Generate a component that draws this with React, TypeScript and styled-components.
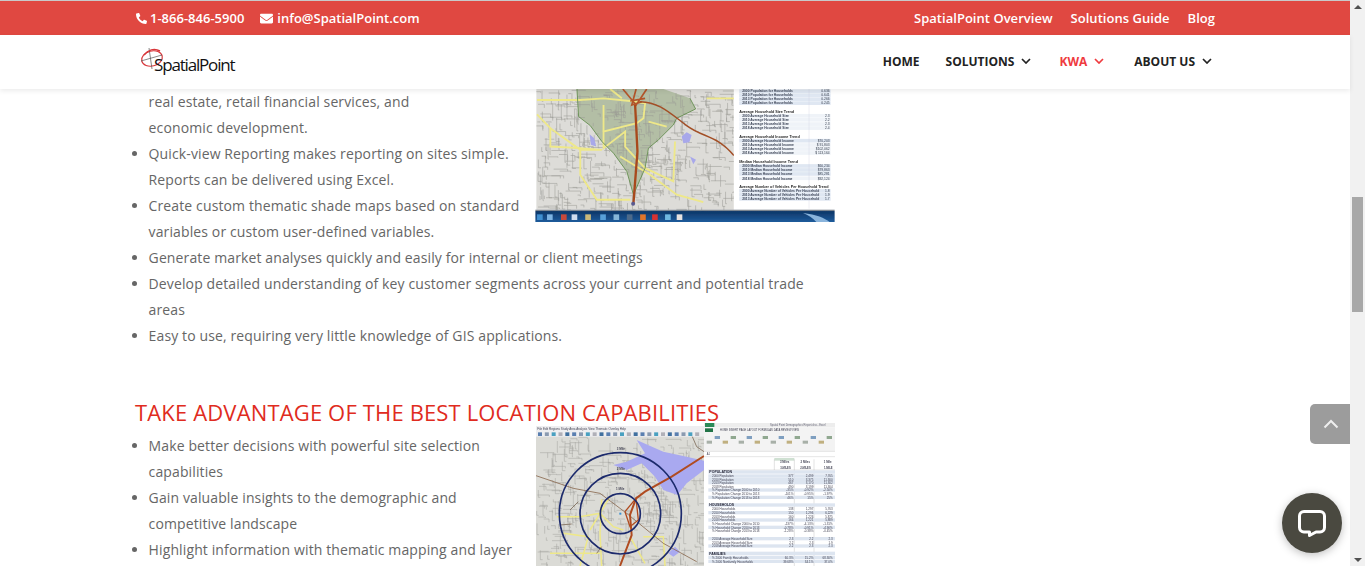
import React from "react";
import styled, { createGlobalStyle } from "styled-components";
import { FaPhone, FaEnvelope } from "react-icons/fa";

const Global = createGlobalStyle`
  html, body { margin: 0; padding: 0; height: 566px; overflow: hidden; background: #fff; }
  * { box-sizing: border-box; }
  body { font-family: "Open Sans", "DejaVu Sans", sans-serif; }
`;

const Shell = styled.div`
  display: flex;
  width: 1365px;
  height: 566px;
  position: relative;
  overflow: hidden;
`;
const Main = styled.div`
  flex: 1;
  min-width: 0;
  display: flex;
  flex-direction: column;
`;
const TopBar = styled.div`
  height: 35px;
  flex: none;
  background: #e04841;
  border-top: 1px solid #c9c9c9;
  padding: 0 135px 0 136px;
  display: flex;
  align-items: center;
  justify-content: space-between;
  color: #fff;
  font-size: 13px;
  font-weight: 600;
  letter-spacing: 0.03px;
`;
const TopGroup = styled.div<{ $gap: number }>`
  display: flex;
  align-items: center;
  gap: ${(p) => p.$gap}px;
`;
const Contact = styled.span`
  display: inline-flex;
  align-items: center;
  gap: 3px;
  white-space: nowrap;
  letter-spacing: 0;
`;
const MailIcon = styled(FaEnvelope)`
  margin-right: 1px;
`;
const PhoneIcon = styled(FaPhone)`
  transform: scaleX(-1);
`;
const NavBar = styled.div`
  height: 54px;
  flex: none;
  background: #fff;
  padding: 0 138px 2px 140px;
  display: flex;
  align-items: center;
  justify-content: space-between;
  box-shadow: 0 2px 5px rgba(0, 0, 0, 0.08);
  position: relative;
  z-index: 2;
`;
const Logo = styled.div`
  position: relative;
  width: 96px;
  height: 29px;
  display: flex;
  align-items: flex-end;
`;
const LogoMark = styled.svg`
  position: absolute;
  left: 0;
  top: 0;
`;
const LogoText = styled.span`
  position: relative;
  margin-left: 14px;
  font-family: "Open Sans", sans-serif;
  font-size: 17px;
  line-height: 22px;
  letter-spacing: -1.17px;
  color: #111;
`;
const Menu = styled.nav`
  display: flex;
  align-items: center;
  gap: 26px;
`;
const MenuItem = styled.span<{ $active?: boolean; $pad?: number }>`
  display: inline-flex;
  align-items: center;
  gap: 7px;
  padding-right: ${(p) => p.$pad ?? 0}px;
  font-size: 12px;
  font-weight: 700;
  color: ${(p) => (p.$active ? "#ef3b3f" : "#222")};
`;
const Content = styled.main`
  flex: 1;
  min-height: 0;
  overflow: hidden;
  padding-left: 135px;
  color: #666;
  font-size: 14px;
  line-height: 26px;
  letter-spacing: 0.12px;
`;
const Section = styled.section`
  width: 700px;
  display: flow-root;
`;
const Figure = styled.svg`
  float: right;
  display: block;
  margin-left: 15px;
`;
const List = styled.ul<{ $top?: number }>`
  margin: 0;
  padding: ${(p) => p.$top ?? 0}px 0 0 13.6px;
  list-style: disc;
`;
const Item = styled.li<{ $plain?: boolean }>`
  list-style: ${(p) => (p.$plain ? "none" : "disc")};
`;
const Heading = styled.h2`
  margin: 53px 0 0;
  font-size: 22px;
  line-height: 21px;
  font-weight: 400;
  letter-spacing: 0.15px;
  color: #e02b20;
  white-space: nowrap;
`;
const Track = styled.div`
  width: 15px;
  flex: none;
  background: #f1f1f1;
  display: flex;
  flex-direction: column;
  align-items: center;
  justify-content: space-between;
  padding-top: 5px;
  padding-bottom: 4px;
  position: relative;
`;
const Arrow = styled.i<{ $down?: boolean }>`
  display: block;
  width: 0;
  height: 0;
  border-left: 4px solid transparent;
  border-right: 4px solid transparent;
  ${(p) => (p.$down ? "border-top: 4px solid #505050;" : "border-bottom: 4px solid #505050;")}
`;
const Thumb = styled.div`
  position: absolute;
  left: 2px;
  top: 197px;
  width: 11px;
  height: 115px;
  background: #a8a8a8;
`;
const BackTop = styled.button`
  position: absolute;
  right: 15px;
  top: 404px;
  width: 40px;
  height: 40px;
  border: 0;
  padding: 0 0 0 1px;
  background: #9c9c9c;
  border-radius: 5px 0 0 5px;
  display: flex;
  align-items: center;
  justify-content: center;
`;
const Chat = styled.button`
  position: absolute;
  left: 1282px;
  top: 493px;
  width: 60px;
  height: 60px;
  border: 0;
  padding: 0;
  border-radius: 50%;
  background: #4a4940;
  box-shadow: 0 2px 8px rgba(0, 0, 0, 0.25);
  display: flex;
  align-items: center;
  justify-content: center;
`;

const Chevron = ({ color = "#222" }: { color?: string }) => (
  <svg width="10" height="6" viewBox="0 0 10 6" fill="none">
    <path d="M1 1l4 4 4-4" stroke={color} strokeWidth="1.7" />
  </svg>
);

const T = ({ x, y, s = 10, b, c = "#445", e, children }: { x: number; y: number; s?: number; b?: boolean; c?: string; e?: boolean; children: React.ReactNode }) => (
  <text x={x} y={y} fontSize={s} fontWeight={b ? 700 : 400} fill={c} fontFamily="Liberation Sans, sans-serif" letterSpacing="0" textAnchor={e ? "end" : "start"}>
    {children}
  </text>
);

const streetLines = (x0: number, x1: number, y0: number, y1: number, seed: number, count: number) => {
  const out: string[] = [];
  let v = seed;
  const next = (m: number) => {
    v = (v * 7919 + 13) % 10007;
    return v % m;
  };
  for (let i = 0; i < count; i++) {
    const x = x0 + next(x1 - x0);
    const y = y0 + next(y1 - y0);
    const l = 8 + next(40);
    out.push(i % 2 ? `M${x} ${y}h${l}v${next(12)}` : `M${x} ${y}v${l}h${next(12)}`);
  }
  return out.join("");
};

const rows1: { y: number; label?: string; val?: string; head?: boolean }[] = [
  { y: 20, label: "2000 Population for Households", val: "0.636" },
  { y: 32, label: "2010 Population for Households", val: "0.641" },
  { y: 44, label: "2013 Population for Households", val: "0.266" },
  { y: 56, label: "2018 Population for Households", val: "0.245" },
  { y: 82, label: "Average Household Size Trend", head: true },
  { y: 94, label: "2000 Average Household Size", val: "2.3" },
  { y: 106, label: "2010 Average Household Size", val: "2.2" },
  { y: 119, label: "2013 Average Household Size", val: "2.3" },
  { y: 131, label: "2018 Average Household Size", val: "2.4" },
  { y: 157, label: "Average Household Income Trend", head: true },
  { y: 169, label: "2000 Average Household Income", val: "$70,203" },
  { y: 182, label: "2010 Average Household Income", val: "$ 91,803" },
  { y: 194, label: "2013 Average Household Income", val: "$102,062" },
  { y: 206, label: "2018 Average Household Income", val: "$ 113,164" },
  { y: 232, label: "Median Household Income Trend", head: true },
  { y: 245, label: "2000 Median Household Income", val: "$60,234" },
  { y: 257, label: "2010 Median Household Income", val: "$79,863" },
  { y: 269, label: "2013 Median Household Income", val: "$85,281" },
  { y: 282, label: "2018 Median Household Income", val: "$92,124" },
  { y: 308, label: "Average Number of Vehicles Per Household Trend", head: true },
  { y: 320, label: "2000 Average Number of Vehicles Per Household", val: "1.8" },
  { y: 332, label: "2010 Average Number of Vehicles Per Household", val: "1.9" },
  { y: 344, label: "2013 Average Number of Vehicles Per Household", val: "1.7" },
];

const rows2: { y: number; label: string; a?: string; b?: string; c?: string; head?: boolean }[] = [
  { y: 158, label: "POPULATION", head: true },
  { y: 170, label: "2000 Population", a: "377", b: "2,499", c: "7,765" },
  { y: 180, label: "2010 Population", a: "510", b: "3,375", c: "11,300" },
  { y: 190, label: "2013 Population", a: "467", b: "3,170", c: "11,302" },
  { y: 201, label: "2018 Population", a: "490", b: "3,199", c: "11,304" },
  { y: 212, label: "% Population Change 2000 to 2010", a: "-35%", b: "-0.92%", c: "-2.50%" },
  { y: 223, label: "% Population Change 2010 to 2013", a: "-101%", b: "-0.95%", c: "-1.97%" },
  { y: 234, label: "% Population Change 2013 to 2018", a: "46%", b: "15%", c: "25%" },
  { y: 257, label: "HOUSEHOLDS", head: true },
  { y: 269, label: "2000 Households", a: "138", b: "1,297", c: "5,763" },
  { y: 280, label: "2010 Households", a: "150", b: "1,296", c: "6,229" },
  { y: 291, label: "2013 Households", a: "160", b: "1,226", c: "5,875" },
  { y: 302, label: "2018 Households", a: "166", b: "1,221", c: "5,889" },
  { y: 313, label: "% Household Change 2000 to 2010", a: "-137%", b: "-4.13%", c: "-1.31%" },
  { y: 324, label: "% Household Change 2010 to 2013", a: "-0.78%", b: "-0.91%", c: "-4.90%" },
  { y: 335, label: "% Household Change 2013 to 2018", a: "-1.28%", b: "-0.38%", c: "-0.45%" },
  { y: 358, label: "2010 Average Household Size", a: "2.3", b: "2.2", c: "2.3" },
  { y: 369, label: "2013 Average Household Size", a: "2.2", b: "2.3", c: "1.9" },
  { y: 380, label: "2018 Average Household Size", a: "2.2", b: "2.3", c: "2.3" },
  { y: 402, label: "FAMILIES", head: true },
  { y: 414, label: "% 2000 Family Households", a: "60.3%", b: "15.2%", c: "68.30%" },
  { y: 426, label: "% 2000 Nonfamily Households", a: "39.68%", b: "34.1%", c: "37.0%" },
];

const MapOne = () => (
  <Figure width="300" height="133" viewBox="15 12 900 400" role="img" aria-label="Map with demographic report">
    <defs>
      <filter id="soft1" x="0" y="0" width="100%" height="100%">
        <feGaussianBlur stdDeviation="1.6" />
      </filter>
      <linearGradient id="bar1" x1="0" x2="0" y1="0" y2="1">
        <stop offset="0" stopColor="#0c3566" />
        <stop offset="1" stopColor="#1f5c9c" />
      </linearGradient>
    </defs>
    <rect x="15" y="12" width="900" height="400" fill="#fff" />
    <g filter="url(#soft1)">
      <rect x="18" y="12" width="594" height="363" fill="#dddcd8" />
      <path d="M140 12L145 95 180 122 215 170 250 205 290 260 310 330 345 250 355 190 385 165 430 120 440 100 497 72 480 40 400 12Z" fill="#b3bea5" />
      <path d={streetLines(18, 612, 12, 375, 41, 520)} stroke="#9a9a96" strokeWidth="1.6" fill="none" />
      <path d="M455 155L470 142 485 150 478 172 460 175ZM178 148L192 160 198 185 182 180ZM480 215L498 225 490 238Z" fill="#a8a8ea" />
      <g stroke="#eee889" strokeWidth="5.500" fill="none">
        <path d="M20 45H150L220 40 300 48 345 55 340 100 320 115 220 140 220 190 285 140 285 185 345 250 430 290 435 170" />
        <path d="M60 130L150 195H215L150 190 150 270 200 345 300 345" />
        <path d="M20 88L60 130 60 185 150 190M530 40H612M360 270L440 330 520 352" />
        <path d="M355 110L410 125M270 215L360 270M220 140L220 60M240 12L275 40" />
      </g>
      <path d="M140 12L145 95 180 122 215 170 250 205 290 260 310 330 345 250 355 190 385 165 430 120 440 100 497 72 480 40" fill="none" stroke="#5e8a48" strokeWidth="2.5" />
      <path d="M278 12L318 60 350 12M300 48L345 40M318 12L305 60 335 50" stroke="#b3552a" strokeWidth="5" fill="none" />
      <path d="M330 50C390 52 420 85 470 122S560 150 612 212" stroke="#a34f27" strokeWidth="4.5" fill="none" />
      <path d="M315 60L322 200 310 355" stroke="#a8481c" strokeWidth="7" fill="none" />
      <circle cx="309" cy="357" r="6" fill="#5a5a90" />
      <rect x="612" y="12" width="303" height="363" fill="#fff" />
      {rows1.map((r) => (
        <g key={r.y}>
          {!r.head && <rect x="628" y={r.y - 7} width="275" height="11" fill={r.y % 4 < 2 ? "#dfe7f2" : "#eff3f8"} />}
          <T x={r.head ? 628 : 637} y={r.y + 2.500} s={r.head ? 11.3 : 10} b c={r.head ? "#262626" : "#3c4456"}>{r.label}</T>
          {r.val && <T x={900} y={r.y + 2.500} s={10} c="#333c4c" e>{r.val}</T>}
        </g>
      ))}
      <path d="M838 12V372" stroke="#ccd" strokeWidth="1" />
      <rect x="15" y="375" width="900" height="4" fill="#7d8690" />
      <rect x="15" y="379" width="900" height="33" fill="url(#bar1)" />
      <path d="M820 385C860 390 885 400 900 412H860C850 400 835 392 820 385Z" fill="#8ab4dc" />
      {[
        [20, "#3f8fd0"], [50, "#7fb4e2"], [92, "#c84a3a"], [124, "#cfdcee"], [165, "#c9b87a"], [210, "#58a0d8"], [250, "#86b6d8"], [290, "#4d6a8a"], [330, "#e0742a"], [366, "#d83030"], [405, "#6fb8e0"], [440, "#e8e2e0"],
      ].map(([x, c]) => (
        <rect key={x as number} x={x as number} y="389" width="17" height="17" fill={c as string} />
      ))}
    </g>
  </Figure>
);

const MapTwo = () => (
  <Figure width="300" height="143" viewBox="15 9 900 429" role="img" aria-label="Trade area rings and Excel report">
    <defs>
      <filter id="soft2" x="0" y="0" width="100%" height="100%">
        <feGaussianBlur stdDeviation="1.5" />
      </filter>
    </defs>
    <rect x="15" y="9" width="900" height="429" fill="#fff" />
    <g filter="url(#soft2)">
      <rect x="18" y="18" width="504" height="420" fill="#dbdbd6" />
      <rect x="18" y="18" width="504" height="32" fill="#eeeef0" />
      <T x={22} y={30} s={9}>File  Edit  Regions  Study Area  Analysis  View  Thematic Overlay  Help</T>
      {Array.from({ length: 24 }, (_, i) => (
        <rect key={i} x={24 + i * 20.5} y="37" width="12" height="11" fill={["#5a7fb0", "#8a9ab0", "#4aa0c0", "#b0b0b8", "#3f6f9f"][i % 5]} />
      ))}
      <path d={streetLines(18, 522, 52, 438, 211, 420)} stroke="#a2a29e" strokeWidth="1.5" fill="none" />
      <path d="M320 60L400 95 470 110 522 122V150L470 190 442 225 400 210 375 170 335 130 290 150 250 135 290 125 345 100Z" fill="#a9a9f0" />
      <path d="M415 400L435 380 450 395 430 410Z" fill="#a9a9f0" />
      <g stroke="#eee889" strokeWidth="4.500" fill="none">
        <path d="M80 290H150L210 280 240 230M180 330L210 280 250 320 280 330M340 350L400 350 405 438M300 350L345 430M215 238L210 340 215 438M100 340L175 350 150 438M60 400H210" />
      </g>
      <path d="M18 167L130 205 210 220 290 280 400 370 500 425" stroke="#8a6a50" strokeWidth="2.5" fill="none" />
      <path d="M487 50L500 80 522 95M120 270L145 245M90 315L125 312M200 400L215 380" stroke="#7d6a58" strokeWidth="2.5" fill="none" />
      <path d="M522 108L425 170 345 215 318 235 300 285 305 345 270 438" stroke="#b04c20" strokeWidth="6" fill="none" />
      <path d="M285 275L318 235 325 300 300 320 285 275" stroke="#b04c20" strokeWidth="4" fill="none" />
      <circle cx="271" cy="281" r="183" fill="none" stroke="#1c2a6c" strokeWidth="5" />
      <circle cx="271" cy="281" r="121" fill="none" stroke="#1c2a6c" strokeWidth="5" />
      <circle cx="271" cy="281" r="60" fill="none" stroke="#1c2a6c" strokeWidth="5" />
      <rect x="268" y="278" width="6" height="6" fill="#3a8fd0" />
      <T x={260} y={90} s={9} b>3 Mile</T>
      <T x={260} y={150} s={9} b>2 Mile</T>
      <T x={258} y={211} s={9} b>1 Mile</T>

      <rect x="522" y="9" width="393" height="429" fill="#fff" />
      <rect x="522" y="9" width="393" height="13" fill="#ededed" />
      <rect x="522" y="22" width="393" height="72" fill="#f3f3f3" />
      <rect x="525" y="8" width="28" height="13" fill="#2a8a58" />
      <rect x="525" y="25" width="24" height="11" fill="#217346" />
      <T x={720} y={19} s={8} c="#667">Spatial Point Demographics Report.xlsx - Excel</T>
      <T x={570} y={33} s={8}>HOME   INSERT   PAGE LAYOUT   FORMULAS   DATA   REVIEW   VIEW</T>
      {Array.from({ length: 16 }, (_, i) => (
        <rect key={i} x={530 + i * 24} y={i % 2 ? 48 : 62} width="16" height="9" fill={["#a8b0a8", "#7f9fc0", "#c0b080", "#90a890"][i % 4]} />
      ))}
      <path d="M522 94H915M522 110H915" stroke="#ccc" strokeWidth="1.5" />
      <T x={530} y={106} s={8}>A1</T>
      <rect x="733" y="114" width="60" height="8" fill="#cfe0d2" />
      <T x={778} y={130} s={8.500} b e>3 Miles</T>
      <T x={840} y={130} s={8.500} b e>2 Miles</T>
      <T x={905} y={130} s={8.500} b e>1 Mile</T>
      <T x={782} y={147} s={8} b e>3-MILES</T>
      <T x={842} y={147} s={8} b e>2-MILES</T>
      <T x={908} y={147} s={8} b e>1-MILE</T>
      <path d="M535 150H915M733 118V150M793 118V438M852 118V438" stroke="#b8b8b8" strokeWidth="1.2" />
      {rows2.map((r) => (
        <g key={r.y}>
          {(r.head || r.y % 2 === 0) && <rect x="535" y={r.y - 7} width="380" height="10" fill="#dde5f0" />}
          <T x={r.head ? 538 : 546} y={r.y + 2} s={r.head ? 10.500 : 9} b={r.head} c={r.head ? "#223" : "#445"}>{r.label}</T>
          {r.a && <T x={790} y={r.y + 2} s={9} e>{r.a}</T>}
          {r.b && <T x={850} y={r.y + 2} s={9} e>{r.b}</T>}
          {r.c && <T x={908} y={r.y + 2} s={9} e>{r.c}</T>}
        </g>
      ))}
    </g>
  </Figure>
);

export default function App() {
  return (
    <Shell>
      <Global />
      <Main>
        <TopBar>
          <TopGroup $gap={16}>
            <Contact><PhoneIcon size={11} />1-866-846-5900</Contact>
            <Contact><MailIcon size={13} />info@SpatialPoint.com</Contact>
          </TopGroup>
          <TopGroup $gap={18}>
            <span>SpatialPoint Overview</span>
            <span>Solutions Guide</span>
            <span>Blog</span>
          </TopGroup>
        </TopBar>
        <NavBar>
          <Logo>
            <LogoMark width="34" height="26" viewBox="0 0 34 26" fill="none" aria-hidden="true">
              <ellipse cx="12" cy="11.5" rx="10.5" ry="7.5" stroke="#d8363a" strokeWidth="1.2" transform="rotate(-14 12 11.5)" />
              <path d="M9 1L12 22M1 14L22 8" stroke="#555" strokeWidth="0.7" />
              <path d="M4 8C8 3 14 1 20 4" stroke="#d8363a" strokeWidth="1.5" />
            </LogoMark>
            <LogoText>SpatialPoint</LogoText>
          </Logo>
          <Menu>
            <MenuItem>HOME</MenuItem>
            <MenuItem $pad={2}>SOLUTIONS <Chevron /></MenuItem>
            <MenuItem $pad={4} $active>KWA <Chevron color="#ef3b3f" /></MenuItem>
            <MenuItem>ABOUT US <Chevron /></MenuItem>
          </Menu>
        </NavBar>
        <Content>
          <Section>
            <MapOne />
            <List>
              <Item $plain>real estate, retail financial services, and<br />economic development.</Item>
              <Item>Quick-view Reporting makes reporting on sites simple.<br />Reports can be delivered using Excel.</Item>
              <Item>Create custom thematic shade maps based on standard variables or custom user-defined variables.</Item>
              <Item>Generate market analyses quickly and easily for internal or client meetings</Item>
              <Item>Develop detailed understanding of key customer segments across your current and potential trade areas</Item>
              <Item>Easy to use, requiring very little knowledge of GIS applications.</Item>
            </List>
          </Section>
          <Heading>TAKE ADVANTAGE OF THE BEST LOCATION CAPABILITIES</Heading>
          <Section>
            <MapTwo />
            <List $top={10}>
              <Item>Make better decisions with powerful site selection capabilities</Item>
              <Item>Gain valuable insights to the demographic and competitive landscape</Item>
              <Item>Highlight information with thematic mapping and layer</Item>
            </List>
          </Section>
        </Content>
      </Main>
      <Track>
        <Arrow />
        <Thumb />
        <Arrow $down />
      </Track>
      <BackTop aria-label="Back to top">
        <svg width="16" height="10" viewBox="0 0 16 10" fill="none">
          <path d="M1.5 8.5L8 2l6.500 6.500" stroke="#eee" strokeWidth="2" />
        </svg>
      </BackTop>
      <Chat aria-label="Open chat">
        <svg width="30" height="29" viewBox="0 0 30 29" fill="none">
          <path d="M7 2.500H23A4.500 4.500 0 0 1 27.500 7V18.500A4.500 4.500 0 0 1 23 23H19L12.500 26.500V23H7A4.500 4.500 0 0 1 2.500 18.500V7A4.500 4.500 0 0 1 7 2.500Z" stroke="#fff" strokeWidth="3" strokeLinejoin="round" />
        </svg>
      </Chat>
    </Shell>
  );
}
